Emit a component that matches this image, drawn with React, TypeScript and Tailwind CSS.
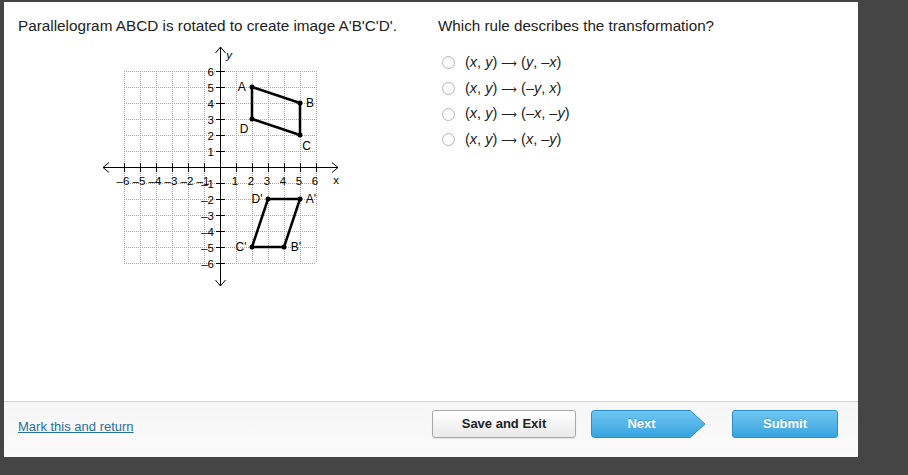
const O = { x: 130, y: 127 };
const U = 16;
const px = (x: number) => O.x + U * x;
const py = (y: number) => O.y - U * y;

const units = [-6, -5, -4, -3, -2, -1, 1, 2, 3, 4, 5, 6];
const gridLines = [-6, -5, -4, -3, -2, -1, 0, 1, 2, 3, 4, 5, 6];

const original = [
  [2, 5],
  [5, 4],
  [5, 2],
  [2, 3],
];
const image = [
  [5, -2],
  [4, -5],
  [2, -5],
  [3, -2],
];

const pointLabels = [
  { t: "A", x: 151.7, y: 46.7 },
  { t: "B", x: 220, y: 62.7 },
  { t: "C", x: 216.7, y: 106 },
  { t: "D", x: 154, y: 89 },
  { t: "D'", x: 167, y: 159.3 },
  { t: "A'", x: 221, y: 159.3 },
  { t: "C'", x: 151, y: 206.7 },
  { t: "B'", x: 206, y: 207 },
];

const choices = [
  ["y", "–x"],
  ["–y", "x"],
  ["–x", "–y"],
  ["x", "–y"],
];

const Graph = () => {
  const poly = (pts: number[][]) => pts.map(([x, y]) => `${px(x)},${py(y)}`).join(" ");
  return (
    <svg width="260" height="250" viewBox="0 0 260 250" className="block">
      <g stroke="#a3a3a3" strokeWidth="1" strokeDasharray="1 1">
        {gridLines.map((g) => (
          <line key={`v${g}`} x1={px(g) + 0.5} y1={py(6)} x2={px(g) + 0.5} y2={py(-6)} />
        ))}
        {gridLines.map((g) => (
          <line key={`h${g}`} x1={px(-6)} y1={py(g) + 0.5} x2={px(6)} y2={py(g) + 0.5} />
        ))}
      </g>
      <g stroke="#000" strokeWidth="1" fill="none">
        <line x1="13" y1={O.y + 0.5} x2="248" y2={O.y + 0.5} />
        <line x1={O.x + 0.5} y1="7" x2={O.x + 0.5} y2="246" />
        <polyline points={`19,${O.y - 4.5} 13,${O.y + 0.5} 19,${O.y + 5.5}`} />
        <polyline points={`242,${O.y - 4.5} 248,${O.y + 0.5} 242,${O.y + 5.5}`} />
        <polyline points={`${O.x - 4.5},13 ${O.x + 0.5},7 ${O.x + 5.5},13`} />
        <polyline points={`${O.x - 4.5},240 ${O.x + 0.5},246 ${O.x + 5.5},240`} />
        {units.map((u) => (
          <line key={`tx${u}`} x1={px(u) + 0.5} y1={O.y - 4} x2={px(u) + 0.5} y2={O.y + 5} />
        ))}
        {units.map((u) => (
          <line key={`ty${u}`} x1={O.x - 4} y1={py(u) + 0.5} x2={O.x + 5} y2={py(u) + 0.5} />
        ))}
      </g>
      <g fontFamily="'Liberation Sans', Arial, sans-serif" fontSize="11.5" fill="#000">
        {units.map((u) => (
          <text key={`lx${u}`} x={px(u) - 1} y={O.y + 18} textAnchor="middle">
            {u < 0 ? `–${-u}` : u}
          </text>
        ))}
        {units.map((u) => (
          <text key={`ly${u}`} x={O.x - 6} y={py(u) + 4.5} textAnchor="end">
            {u < 0 ? `–${-u}` : u}
          </text>
        ))}
        <text x="246" y="144" textAnchor="middle">x</text>
        <text x="139" y="19" textAnchor="middle" fontStyle="italic">y</text>
        {pointLabels.map((p) => (
          <text key={p.t} x={p.x} y={p.y + 4} textAnchor="middle" fontSize="12">
            {p.t}
          </text>
        ))}
      </g>
      <g stroke="#000" strokeWidth="2.5" fill="none" strokeLinejoin="round">
        <polygon points={poly(original)} />
        <polygon points={poly(image)} />
      </g>
      <g fill="#000">
        {[...original, ...image].map(([x, y]) => (
          <circle key={`${x},${y}`} cx={px(x)} cy={py(y)} r="2.5" />
        ))}
      </g>
    </svg>
  );
};

const Var = ({ v }: { v: string }) =>
  v.startsWith("–") ? (
    <>
      –<i>{v.slice(1)}</i>
    </>
  ) : (
    <i>{v}</i>
  );

export default function App() {
  return (
    <div className="h-[475px] w-[908px] overflow-hidden bg-[#454545] pl-[4px] pt-[2px] font-['Liberation_Sans',Arial,sans-serif] text-[#222]">
      <div className="flex h-[455px] w-[854px] flex-col bg-white">
        <div className="flex h-[399px]">
          <div className="w-[434px] pl-[14px] pt-[15px]">
            <p className="text-[15.3px] leading-[18px]">
              Parallelogram ABCD is rotated to create image A'B'C'D'.
            </p>
            <div className="ml-[72px] mt-[5px]">
              <Graph />
            </div>
          </div>
          <div className="pt-[15px]">
            <p className="text-[15.2px] leading-[18px]">Which rule describes the transformation?</p>
            <ul className="mt-[15px]">
              {choices.map(([a, b], i) => (
                <li key={i} className="flex h-[25.7px] items-center">
                  <span className="ml-[4px] h-[13px] w-[13px] rounded-full border border-[#b5b5b5] bg-white" />
                  <span className="ml-[10px] text-[14.5px] leading-[18px]">
                    (<i>x</i>, <i>y</i>){" "}
                    <span className="font-['DejaVu_Sans',sans-serif] text-[11px]">⟶</span>{" "}
                    (<Var v={a} />, <Var v={b} />)
                  </span>
                </li>
              ))}
            </ul>
          </div>
        </div>
        <div className="flex h-[56px] items-start border-t border-[#d6d6d6] bg-gradient-to-b from-[#f6f6f6] to-[#fafafa] pl-[14px] pr-[20px]">
          <a href="#" className="mt-[17px] text-[13px] leading-[16px] text-[#2a6f9e] underline">
            Mark this and return
          </a>
          <div className="ml-auto mt-[8px] flex items-start">
            <button
              type="button"
              className="h-[28px] w-[144px] rounded-[3px] border border-[#a9a9a9] bg-gradient-to-b from-white to-[#e9e9e9] text-[13px] font-bold text-[#222] shadow-[0_1px_1px_rgba(0,0,0,0.08)]"
            >
              Save and Exit
            </button>
            <button type="button" className="relative ml-[15px] flex h-[28px] w-[115px] items-center justify-center">
              <svg className="absolute inset-0" width="115" height="28" viewBox="0 0 115 28">
                <defs>
                  <linearGradient id="nextg" x1="0" y1="0" x2="0" y2="1">
                    <stop offset="0" stopColor="#70c7f1" />
                    <stop offset="1" stopColor="#36a3e0" />
                  </linearGradient>
                </defs>
                <path
                  d="M3.5 0.5 H99 L114 14 L99 27.5 H3.5 Q0.5 27.5 0.5 24.5 V3.5 Q0.5 0.5 3.5 0.5 Z"
                  fill="url(#nextg)"
                  stroke="#2b8ccb"
                />
              </svg>
              <span className="relative pr-[14px] text-[13px] font-bold text-white [text-shadow:0_-1px_0_rgba(0,0,0,0.2)]">
                Next
              </span>
            </button>
            <button
              type="button"
              className="ml-[26px] h-[28px] w-[106px] rounded-[3px] border border-[#2b8ccb] bg-gradient-to-b from-[#70c7f1] to-[#36a3e0] text-[13px] font-bold text-white [text-shadow:0_-1px_0_rgba(0,0,0,0.2)]"
            >
              Submit
            </button>
          </div>
        </div>
      </div>
    </div>
  );
}
